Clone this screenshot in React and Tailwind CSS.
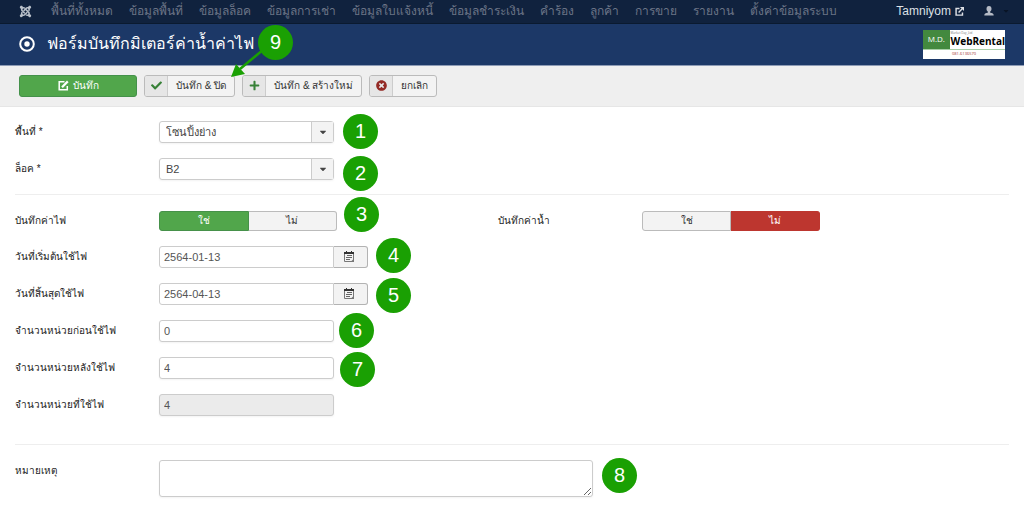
import React, { useState } from "react";
import {
  FaCaretDown,
  FaCheck,
  FaJoomla,
  FaPlus,
  FaTimesCircle,
} from "react-icons/fa";

const menu = [
  "พื้นที่ทั้งหมด",
  "ข้อมูลพื้นที่",
  "ข้อมูลล็อค",
  "ข้อมูลการเช่า",
  "ข้อมูลใบแจ้งหนี้",
  "ข้อมูลชำระเงิน",
  "คำร้อง",
  "ลูกค้า",
  "การขาย",
  "รายงาน",
  "ตั้งค่าข้อมูลระบบ",
];

// numbered help markers that float over the form
const markers = [
  { n: 1, place: "left-[343px] top-[114px]" },
  { n: 2, place: "left-[343px] top-[156px]" },
  { n: 3, place: "left-[344px] top-[197px]" },
  { n: 4, place: "left-[376px] top-[238px]" },
  { n: 5, place: "left-[376px] top-[278px]" },
  { n: 6, place: "left-[339px] top-[313px]" },
  { n: 7, place: "left-[340px] top-[352px]" },
  { n: 8, place: "left-[602px] top-[458px]" },
  { n: 9, place: "left-[258px] top-[25px]" },
];

function Row({ id, label, children }) {
  return (
    <div className="flex items-start">
      <label htmlFor={id} className="w-36 shrink-0 leading-[22px]">
        {label}
      </label>
      {children}
    </div>
  );
}

function SelectBox({ id, value }) {
  return (
    <div className="relative h-[22px] w-[175px]">
      <select
        id={id}
        defaultValue={value}
        className="h-full w-full appearance-none rounded-[3px] border border-[#ccc] bg-white pr-6 pl-1.5 text-[11px] text-[#444] shadow-xs"
      >
        <option>{value}</option>
      </select>
      <span className="pointer-events-none absolute inset-y-px right-px flex w-[22px] items-center justify-center border-l border-[#ccc] bg-[#f3f3f3] text-[10px] text-[#444]">
        <FaCaretDown />
      </span>
    </div>
  );
}

function TextBox({ id, value, disabled }) {
  return (
    <input
      id={id}
      type="text"
      defaultValue={value}
      disabled={disabled}
      className="h-[22px] w-[175px] rounded-[3px] border border-[#ccc] bg-white px-1 text-[11px] text-[#555] shadow-xs disabled:bg-[#ebebeb]"
    />
  );
}

function DateBox({ id, value }) {
  return (
    <div className="flex h-[22px]">
      <input
        id={id}
        type="text"
        defaultValue={value}
        className="w-[175px] rounded-l-[3px] border border-[#ccc] bg-white px-1 text-[11px] text-[#555]"
      />
      <button
        type="button"
        aria-label="ปฏิทิน"
        className="flex w-[34px] items-center justify-center rounded-r-[3px] border border-l-0 border-[#b3b3b3] bg-[#f3f3f3] pr-1"
      >
        <svg viewBox="0 0 12 12" className="h-3 w-3" fill="none" stroke="#777">
          <path d="M1 1h2V0h1v1h4V0h1v1h2v2H1z" fill="#333" stroke="none" />
          <path d="M1.500 3v7.500H10.500V3" />
          <path d="M4 4.500h5M3 6.500h6M3 8.500h4" stroke="#666" />
          <path d="M11 7.500V11H7.500z" fill="#777" stroke="none" />
        </svg>
      </button>
    </div>
  );
}

function YesNo({ name, label, initial }) {
  const [value, setValue] = useState(initial);
  const idle = "border-[#bbb] bg-[#f3f3f3] text-[#333]";
  const yes = value === "yes" ? "border-[#46914a] bg-[#51a64b] text-white" : idle;
  const no = value === "no" ? "border-[#bd362f] bg-[#bd362f] text-white" : idle;

  return (
    <fieldset className="flex items-start">
      <legend className="float-left w-36 shrink-0 leading-5">{label}</legend>
      <div className="flex h-5 w-[178px]">
        <label
          className={`relative flex flex-1 items-center justify-center rounded-l-[3px] border leading-4 ${yes}`}
        >
          <input
            type="radio"
            name={name}
            checked={value === "yes"}
            onChange={() => setValue("yes")}
            className="sr-only"
          />
          ใช่
        </label>
        <label
          className={`relative flex flex-1 items-center justify-center rounded-r-[3px] border border-l-0 leading-4 ${no}`}
        >
          <input
            type="radio"
            name={name}
            checked={value === "no"}
            onChange={() => setValue("no")}
            className="sr-only"
          />
          ไม่
        </label>
      </div>
    </fieldset>
  );
}

function ToolButton({ icon, children }) {
  return (
    <button
      type="button"
      className="flex h-[22px] items-stretch rounded-[3px] border border-[#bbb] bg-[#f3f3f3] text-[#333]"
    >
      <span className="flex w-[23px] items-center justify-center rounded-l-[2px] border-r border-[#ccc] bg-[#e6e6e6] text-[11px]">
        {icon}
      </span>
      <span className="self-center px-2">{children}</span>
    </button>
  );
}

function Navbar() {
  return (
    <nav className="flex h-6 items-center border-b border-[#0a1a30] bg-[#10223e] pr-[14px] pb-px pl-[19px] text-[12px] text-[#6b7486]">
      <a href="#home" aria-label="Joomla" className="mr-[19px] text-[#b9c0ca]">
        <FaJoomla className="h-[13px] w-[13px]" />
      </a>
      <div className="flex gap-4 whitespace-nowrap">
        {menu.map((item) => (
          <a key={item} href="#menu">
            {item}
          </a>
        ))}
      </div>
      <a
        href="#site"
        className="ml-auto flex items-center gap-1 text-[12px] text-[#dde0e5]"
      >
        Tamniyom
        <svg viewBox="0 0 10 10" className="h-[9px] w-[9px]" fill="none" stroke="currentColor" strokeWidth="1.6">
          <path d="M5 1.700H1.200V9H8.300V6" />
          <path d="M4 6l4-4" />
          <path d="M5.500 0H10v4.500z" fill="currentColor" stroke="none" />
        </svg>
      </a>
      <button type="button" aria-label="ผู้ใช้" className="ml-5 flex items-center gap-2">
        <svg viewBox="0 0 10 10" className="h-[10px] w-[10px]" fill="#b5bbc6">
          <path d="M5 0C6.800 0 7.500 1.200 7.500 2.700C7.500 4 7 5 6.200 5.500V6.700C8.500 7 9.700 7.500 9.700 9.500H.3C.3 7.500 1.500 7 3.800 6.700V5.500C3 5 2.500 4 2.500 2.700C2.500 1.200 3.200 0 5 0z" />
        </svg>
        <FaCaretDown className="h-2 w-2 text-[#091426]" />
      </button>
    </nav>
  );
}

function Logo() {
  return (
    <div className="flex h-[29px] w-[82px] flex-col bg-white font-['Open_Sans',sans-serif]">
      <div className="flex h-5 border-b border-[#a9cfa9]">
        <span className="flex w-[27px] items-center justify-center bg-[#43893f] text-[8px] text-white">
          M.D.
        </span>
        <span className="flex flex-1 flex-col pl-px text-black">
          <span className="h-1 text-[3px] leading-[6px] text-[#777]">Market Day_Ltd</span>
          <span className="text-[10px] leading-[14px] font-bold">WebRental</span>
        </span>
      </div>
      <span className="text-center text-[4px] leading-[8px] text-[#a03030]">
        081-6136570
      </span>
    </div>
  );
}

function Header() {
  return (
    <header className="flex h-[42px] items-center justify-between border-b border-[#8d9bb5] bg-[#1c3867] px-[19px] pb-px text-white">
      <h1 className="flex items-center gap-3 text-[16px]">
        <svg viewBox="0 0 16 16" className="h-4 w-4">
          <circle cx="8" cy="8" r="6.800" fill="none" stroke="currentColor" strokeWidth="2" />
          <circle cx="8" cy="8" r="2.700" fill="currentColor" />
        </svg>
        ฟอร์มบันทึกมิเตอร์ค่าน้ำค่าไฟ
      </h1>
      <Logo />
    </header>
  );
}

function Toolbar() {
  return (
    <div className="flex h-[41px] items-center gap-[7px] border-b border-[#e6e6e6] bg-[#efefef] px-[19px] pb-px">
      <button
        type="button"
        className="flex h-[22px] w-[118px] items-center justify-center gap-1 rounded-[3px] border border-[#44914a] bg-[#51a64b] text-white"
      >
        <svg viewBox="0 0 11 11" className="h-[11px] w-[11px]" fill="none" stroke="currentColor">
          <path d="M6.500 1.700H1.200V9.800H9.300V6" strokeWidth="1.500" />
          <path d="M4 7.200L9.800 1.400" strokeWidth="2.200" />
        </svg>
        บันทึก
      </button>
      <ToolButton icon={<FaCheck className="text-[#378137]" />}>บันทึก &amp; ปิด</ToolButton>
      <ToolButton icon={<FaPlus className="text-[#378137]" />}>บันทึก &amp; สร้างใหม่</ToolButton>
      <ToolButton icon={<FaTimesCircle className="text-[#942a25]" />}>ยกเลิก</ToolButton>
    </div>
  );
}

function App() {
  return (
    <div className="relative min-h-screen bg-white font-['Liberation_Sans',sans-serif] text-[10px] text-[#222]">
      <Navbar />
      <Header />
      <Toolbar />

      <form className="px-[15px] pt-[14px]">
        <div className="flex flex-col gap-[15px] border-b border-[#eee] pb-[14px]">
          <Row id="zone" label="พื้นที่ *">
            <SelectBox id="zone" value="โซนปิ้งย่าง" />
          </Row>
          <Row id="lock" label="ล็อค *">
            <SelectBox id="lock" value="B2" />
          </Row>
        </div>

        <div className="grid grid-cols-[17fr_18fr] border-b border-[#eee] pt-4 pb-7">
          <div className="flex flex-col gap-[15px]">
            <YesNo name="electric" label="บันทึกค่าไฟ" initial="yes" />
            <Row id="start" label="วันที่เริ่มต้นใช้ไฟ">
              <DateBox id="start" value="2564-01-13" />
            </Row>
            <Row id="end" label="วันที่สิ้นสุดใช้ไฟ">
              <DateBox id="end" value="2564-04-13" />
            </Row>
            <Row id="before" label="จำนวนหน่วยก่อนใช้ไฟ">
              <TextBox id="before" value="0" />
            </Row>
            <Row id="after" label="จำนวนหน่วยหลังใช้ไฟ">
              <TextBox id="after" value="4" />
            </Row>
            <Row id="used" label="จำนวนหน่วยที่ใช้ไฟ">
              <TextBox id="used" value="4" disabled />
            </Row>
          </div>
          <YesNo name="water" label="บันทึกค่าน้ำ" initial="no" />
        </div>

        <div className="pt-[15px]">
          <Row id="note" label="หมายเหตุ">
            <textarea
              id="note"
              className="h-[37px] w-[434px] rounded-[3px] border border-[#ccc] bg-white px-1 text-[11px] shadow-xs"
            />
          </Row>
        </div>
      </form>

      <svg
        viewBox="0 0 36 30"
        className="absolute top-[49px] left-[230px] h-[30px] w-9"
        fill="#1aa003"
      >
        <path d="M34 0L10 20" stroke="#1aa003" strokeWidth="2.500" />
        <path d="M1 28L6 15L15 25z" />
      </svg>
      {markers.map(({ n, place }) => (
        <span
          key={n}
          className={`absolute flex h-[35px] w-[35px] items-center justify-center rounded-full bg-[#1aa003] pb-0.5 text-[20px] text-white ${place}`}
        >
          {n}
        </span>
      ))}
    </div>
  );
}

export default App;
